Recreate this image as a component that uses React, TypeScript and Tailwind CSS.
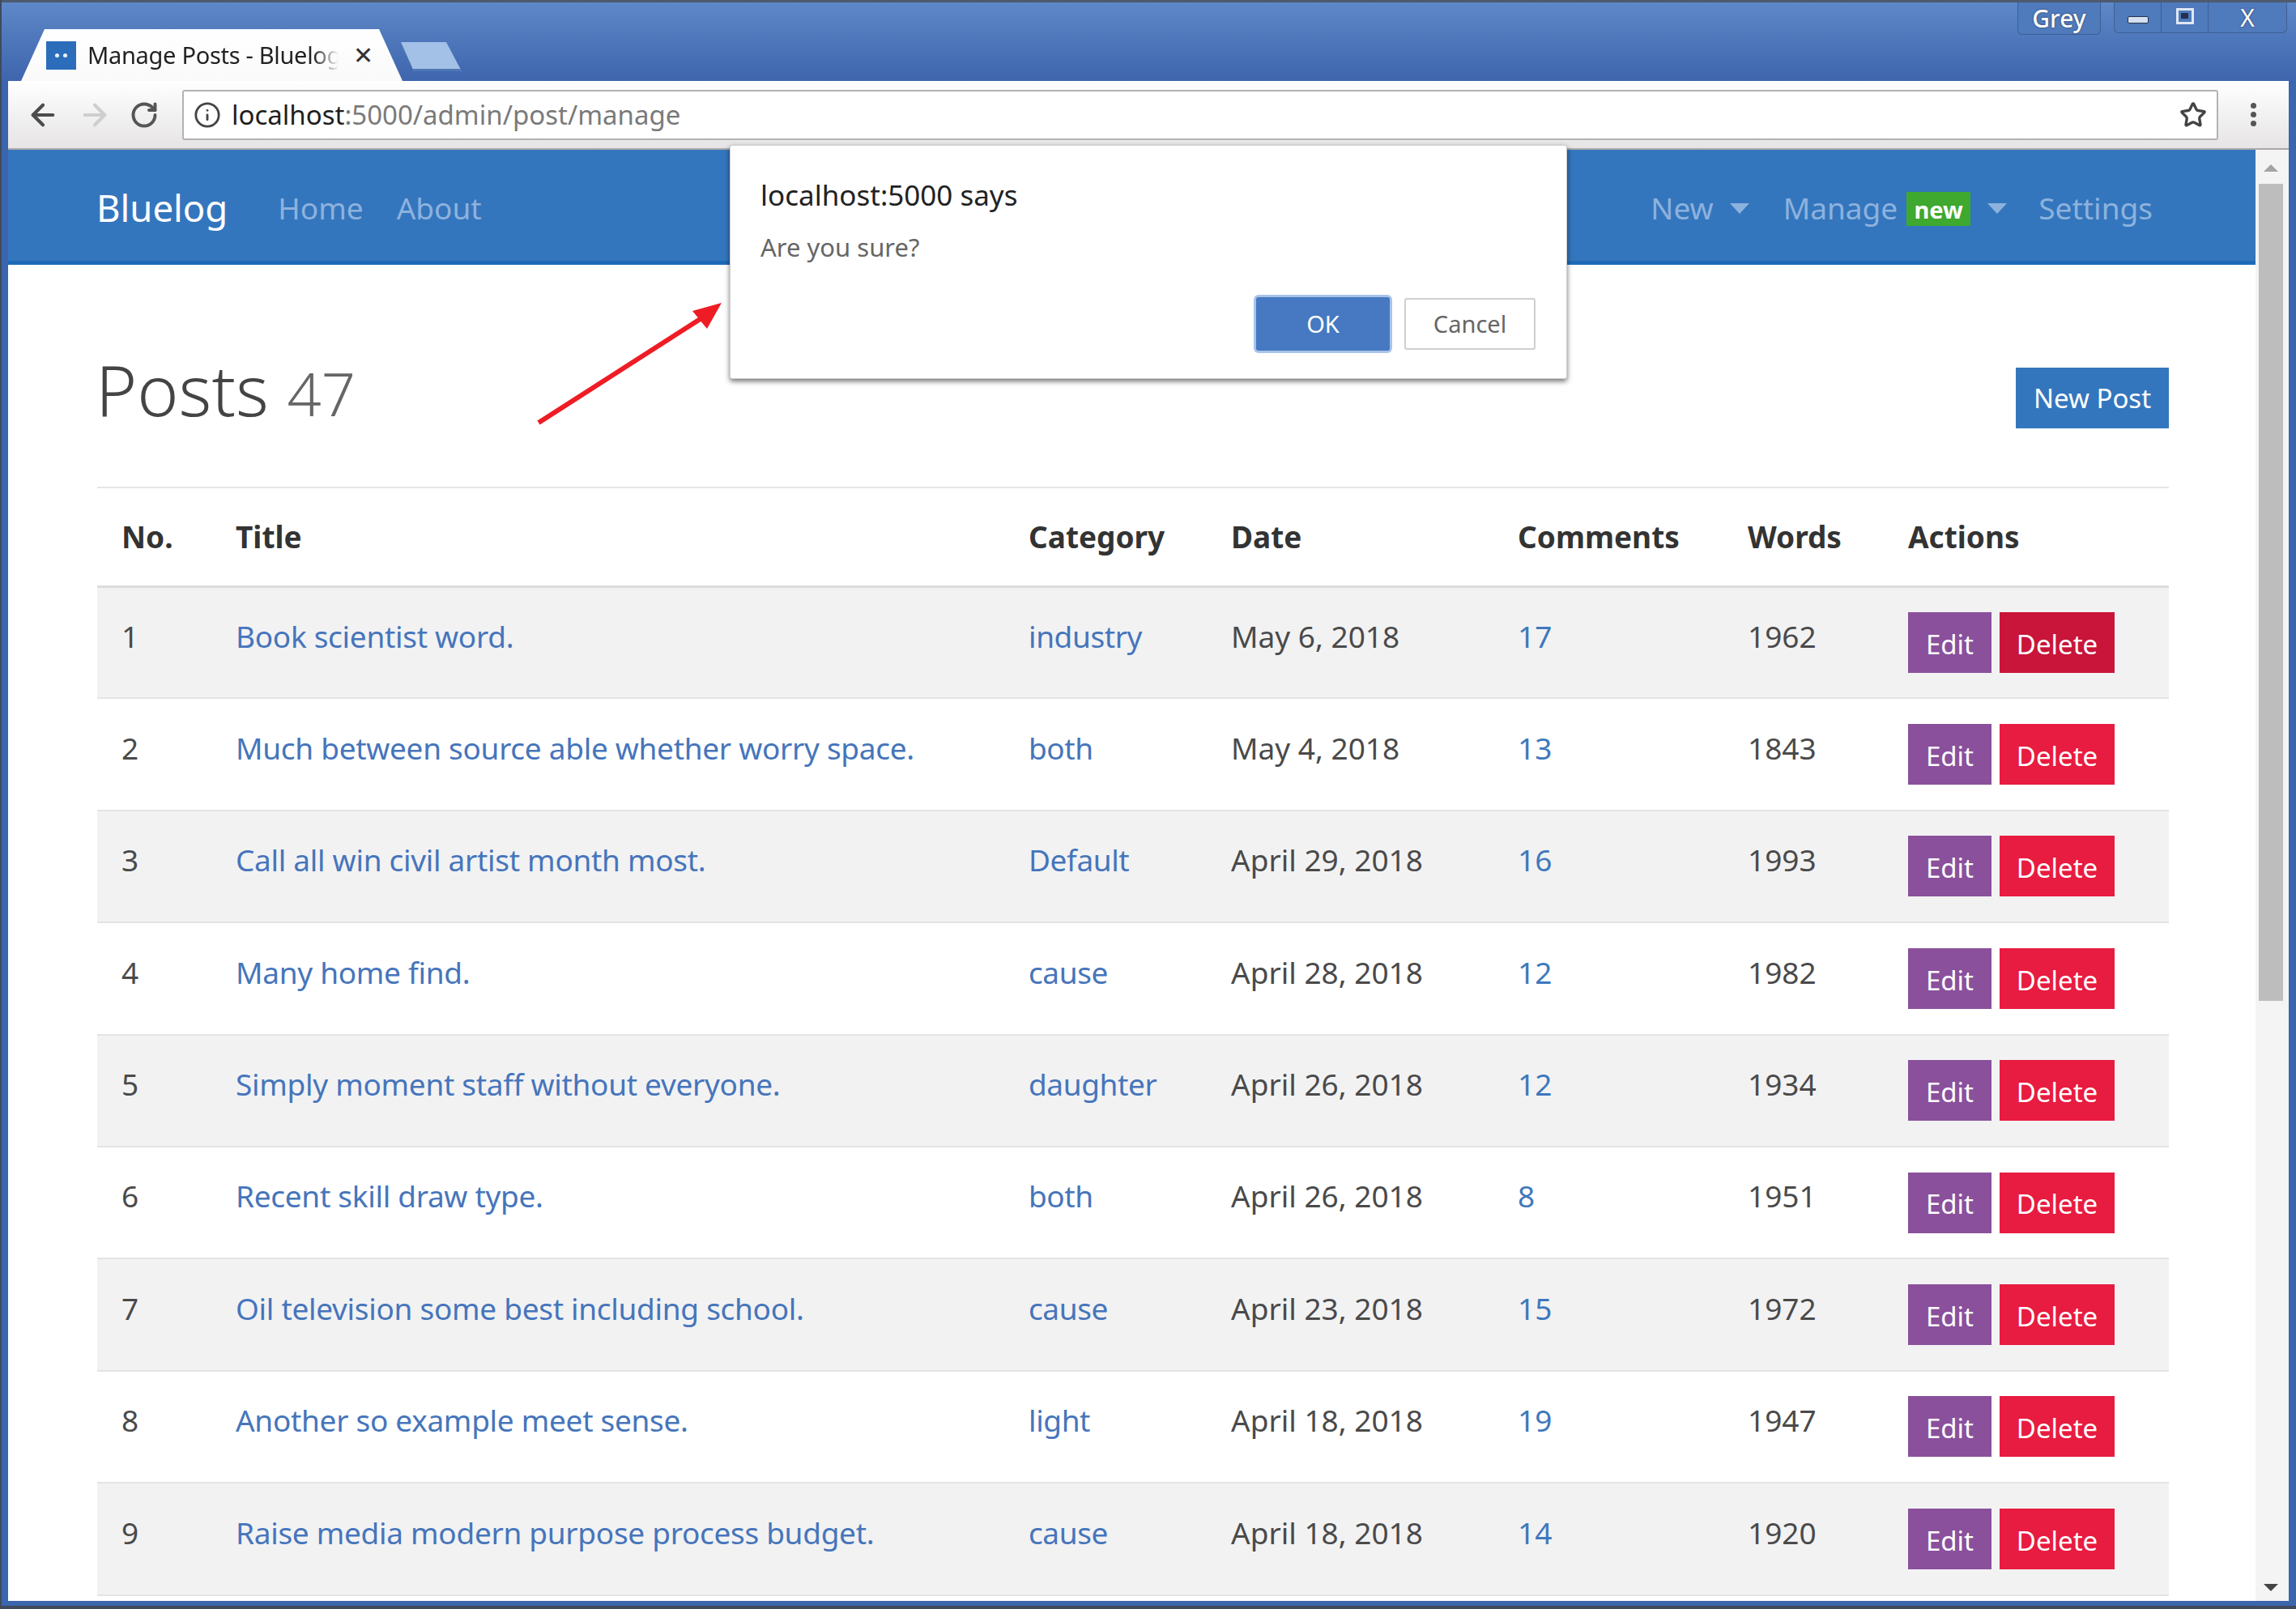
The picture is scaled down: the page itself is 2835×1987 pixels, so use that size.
import { ArrowLeft, ArrowRight, RotateCw, Info, Star } from "lucide-react";

const rows: [string, string, string, string, string, string][] = [
  ["1", "Book scientist word.", "industry", "May 6, 2018", "17", "1962"],
  ["2", "Much between source able whether worry space.", "both", "May 4, 2018", "13", "1843"],
  ["3", "Call all win civil artist month most.", "Default", "April 29, 2018", "16", "1993"],
  ["4", "Many home find.", "cause", "April 28, 2018", "12", "1982"],
  ["5", "Simply moment staff without everyone.", "daughter", "April 26, 2018", "12", "1934"],
  ["6", "Recent skill draw type.", "both", "April 26, 2018", "8", "1951"],
  ["7", "Oil television some best including school.", "cause", "April 23, 2018", "15", "1972"],
  ["8", "Another so example meet sense.", "light", "April 18, 2018", "19", "1947"],
  ["9", "Raise media modern purpose process budget.", "cause", "April 18, 2018", "14", "1920"],
];

function Caret() {
  return <span className="w-0 h-0 border-x-[12px] border-x-transparent border-t-[13px] border-t-[#8db2de] inline-block" />;
}

export default function App() {
  return (
    <div className="relative w-[2835px] h-[1987px] overflow-hidden flex flex-col bg-[#3b66ae] border-l-[2px] border-b-[4px] border-[#3f4a5c] font-['Noto_Sans','Open_Sans',sans-serif] text-[#4a4a4a]">
      {/* Title bar */}
      <div className="h-[100px] shrink-0 relative flex items-end border-t-[3px] border-[#4d5a70] bg-gradient-to-b from-[#5e88c8] to-[#3e65ad] pl-[24px]">
        <div className="h-[64px] w-[471px] bg-gradient-to-b from-white to-[#fafafa] [clip-path:polygon(29px_0,442px_0,471px_100%,0_100%)] flex items-center pl-[31px] gap-[14px]">
          <div className="w-[37px] h-[35px] bg-[#2b6dbb] flex items-center justify-center gap-[5px]">
            <span className="w-[5px] h-[5px] bg-white/90 rounded-full" />
            <span className="w-[5px] h-[5px] bg-white/90 rounded-full" />
          </div>
          <span className="w-[310px] overflow-hidden whitespace-nowrap text-[29px] tracking-[-0.3px] text-[#222] leading-[36px] [mask-image:linear-gradient(to_right,black_90%,transparent)]">Manage Posts - Bluelog</span>
          <span className="text-[30px] leading-none text-[#333] ml-[4px]">✕</span>
        </div>
        <div className="ml-[-2px] mb-[12px] h-[36px] w-[75px] bg-[#a3c0e6] border-b-[3px] border-[#4f76b5] [clip-path:polygon(0_0,56px_0,75px_100%,16px_100%)]" />
        <div className="absolute top-0 right-[11px] flex gap-[16px] items-start">
          <div className="w-[103px] h-[40px] rounded-b-[6px] border border-t-0 border-[#3f5f95] bg-[#4f7abb] flex items-center justify-center text-[30px] text-white leading-none font-medium [text-shadow:0_0_2px_#1e2a44]">Grey</div>
          <div className="h-[38px] w-[214px] rounded-b-[6px] border border-t-0 border-[#3f5f95] bg-[#4f7abb] flex items-center text-white">
            <div className="w-[58px] flex justify-center border-r border-[#3f5f95] h-full items-center"><span className="w-[26px] h-[9px] mt-[6px] bg-[#d4dff0] border border-[#23324f] rounded-[2px]" /></div>
            <div className="w-[58px] flex justify-center border-r border-[#3f5f95] h-full items-center"><span className="w-[22px] h-[20px] mb-[4px] border-[3px] border-[#dfe7f4] flex items-center justify-center"><span className="w-[9px] h-[7px] bg-[#23324f]" /></span></div>
            <div className="flex-1 flex justify-center text-[30px] leading-none [text-shadow:0_0_2px_#1e2a44]">X</div>
          </div>
        </div>
      </div>

      {/* Toolbar */}
      <div className="h-[85px] shrink-0 ml-[8px] mr-[9px] flex items-center bg-gradient-to-b from-white to-[#e6e4e4] border-b-[2px] border-[#a9a9a9]">
        <div className="w-[215px] shrink-0 flex items-center pl-[22px] gap-[22px]">
          <ArrowLeft className="w-[42px] h-[42px] text-[#4c4c4c]" strokeWidth={2.4} />
          <ArrowRight className="w-[42px] h-[42px] text-[#cfcfcf]" strokeWidth={2.4} />
          <RotateCw className="w-[36px] h-[36px] text-[#555]" strokeWidth={2.6} />
        </div>
        <div className="w-[2514px] h-[62px] bg-white border-2 border-[#b3b3b3] rounded-[3px] flex items-center pl-[12px] pr-[12px]">
          <Info className="w-[34px] h-[34px] text-[#444]" strokeWidth={2} />
          <span className="ml-[13px] text-[33px] leading-none whitespace-nowrap"><span className="text-[#1e1e1e]">localhost</span><span className="text-[#7a7a7a]">:5000/admin/post/manage</span></span>
          <Star className="ml-auto w-[34px] h-[34px] text-[#444]" strokeWidth={2.4} />
        </div>
        <div className="flex-1 flex flex-col items-center gap-[4px]">
          <span className="w-[7px] h-[7px] rounded-full bg-[#555]" />
          <span className="w-[7px] h-[7px] rounded-full bg-[#555]" />
          <span className="w-[7px] h-[7px] rounded-full bg-[#555]" />
        </div>
      </div>

      {/* Viewport */}
      <div className="flex-1 min-h-0 ml-[8px] mr-[9px] mb-[6px] flex bg-white">
        <main className="flex-1 min-w-0 flex flex-col">
          <nav className="h-[142px] shrink-0 flex items-center bg-[#3476bd] border-b-[5px] border-[#1e6bb8] pl-[109px] pr-[127px] pt-[7px] text-[37px] text-[#8db2de]">
            <span className="text-[45.5px] text-white leading-none">Bluelog</span>
            <span className="ml-[62px]">Home</span>
            <span className="ml-[41px]">About</span>
            <div className="ml-auto flex items-center">
              <span>New</span>
              <span className="ml-[20px] flex"><Caret /></span>
              <span className="ml-[42px]">Manage</span>
              <span className="ml-[11px] w-[79px] h-[42px] mt-[2px] bg-[#3ea82f] text-white text-[29px] font-bold flex items-center justify-center leading-none">new</span>
              <span className="ml-[21px] flex"><Caret /></span>
              <span className="ml-[39px]">Settings</span>
            </div>
          </nav>

          <div className="flex-1 min-h-0 pl-[110px] pr-[107px]">
            <div className="h-[276px] flex items-start justify-between border-b-[2px] border-[#e6e6e6]">
              <h1 className="mt-[93px] -ml-[2px] text-[87px] font-light leading-[120px] text-[#444]">Posts <span className="text-[74px] text-[#666]">47</span></h1>
              <button className="mt-[127px] w-[189px] h-[75px] bg-[#3476bd] text-white text-[33px]">New Post</button>
            </div>
            <table className="w-full table-fixed border-collapse text-[37px]">
              <colgroup>
                <col className="w-[171px]" />
                <col className="w-[979px]" />
                <col className="w-[250px]" />
                <col className="w-[354px]" />
                <col className="w-[284px]" />
                <col className="w-[198px]" />
                <col />
              </colgroup>
              <thead>
                <tr className="h-[121px] border-b-[3px] border-[#dcdcdc] text-left text-[#333]">
                  <th className="pl-[30px] font-bold">No.</th>
                  <th className="font-bold">Title</th>
                  <th className="font-bold">Category</th>
                  <th className="font-bold">Date</th>
                  <th className="font-bold">Comments</th>
                  <th className="font-bold">Words</th>
                  <th className="font-bold">Actions</th>
                </tr>
              </thead>
              <tbody>
                {rows.map((r, i) => (
                  <tr key={r[0]} className={`h-[138.4px] border-b-[2px] border-[#e4e4e4] ${i % 2 === 0 ? "bg-[#f2f2f3]" : "bg-white"}`}>
                    <td className="pl-[30px] pb-[16px]">{r[0]}</td>
                    <td className="pb-[16px] text-[#4675bb] tracking-[-0.3px] whitespace-nowrap">{r[1]}</td>
                    <td className="pb-[16px] text-[#4675bb] tracking-[-0.4px]">{r[2]}</td>
                    <td className="pb-[16px]">{r[3]}</td>
                    <td className="pb-[16px] text-[#3f78bd]">{r[4]}</td>
                    <td className="pb-[16px]">{r[5]}</td>
                    <td>
                      <div className="flex gap-[10px]">
                        <button className="w-[103px] h-[75px] pt-[4px] bg-[#8a509c] text-white text-[33px]">Edit</button>
                        <button className={`w-[142px] h-[75px] pt-[4px] text-white text-[33px] ${i === 0 ? "bg-[#c9153a]" : "bg-[#e81b40]"}`}>Delete</button>
                      </div>
                    </td>
                  </tr>
                ))}
              </tbody>
            </table>
          </div>
        </main>

        {/* Scrollbar */}
        <div className="w-[41px] shrink-0 bg-[#f4f4f4] flex flex-col items-center pr-[4px]">
          <span className="mt-[18px] w-0 h-0 border-x-[9px] border-x-transparent border-b-[9px] border-b-[#a3a3a3]" />
          <div className="mt-[15px] h-[1009px] w-[30px] bg-[#bdbdbd]" />
          <span className="mt-auto mb-[12px] w-0 h-0 border-x-[9px] border-x-transparent border-t-[9px] border-t-[#444]" />
        </div>
      </div>

      {/* Red annotation arrow */}
      <svg className="absolute left-[653px] top-[364px]" width="250" height="170" viewBox="0 0 250 170">
        <line x1="10" y1="158" x2="222" y2="22" stroke="#ee1c25" strokeWidth="6" />
        <polygon points="236,10 200,20 218,42" fill="#ee1c25" />
      </svg>

      {/* JS confirm dialog */}
      <div className="absolute left-[899px] top-[179px] w-[1034px] h-[289px] bg-white rounded-[3px] border border-[#cfcfcf] shadow-[0_3px_6px_rgba(0,0,0,0.55)] pt-[37px] pl-[37px] pr-[38px]">
        <div className="text-[35px] leading-[48px] text-[#222]">localhost:5000 says</div>
        <div className="mt-[19px] text-[31px] leading-[42px] text-[#666]">Are you sure?</div>
        <div className="mt-[41px] flex justify-end gap-[18px] items-center">
          <button className="w-[165px] h-[66px] rounded-[3px] bg-[#4679c1] text-white text-[29px] shadow-[0_0_0_3px_#a8c4ea]">OK</button>
          <button className="w-[162px] h-[64px] rounded-[3px] bg-white border-2 border-[#cfcfcf] text-[#666] text-[29px]">Cancel</button>
        </div>
      </div>
    </div>
  );
}
